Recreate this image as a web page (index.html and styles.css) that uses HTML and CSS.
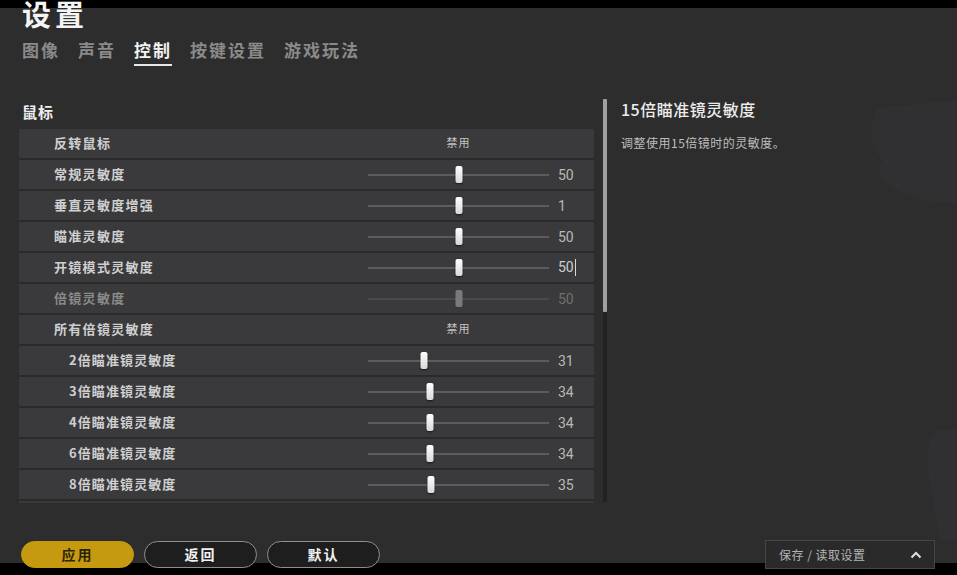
FILE: index.html
```html
<!DOCTYPE html>
<html lang="zh">
<head>
  <meta charset="UTF-8" />
  <meta name="viewport" content="width=device-width, initial-scale=1.0"/>
  <title>设置 - 控制</title>
  <link rel="stylesheet" href="styles.css">
</head>
<body>

  <div class="topbar"></div>

  <svg class="decor" width="120" height="440" viewBox="0 0 120 440">
    <path d="M40 8 L120 0 L120 104 L84 100 C64 92 30 80 46 60 C34 48 30 28 40 8 Z" fill="#303032"/>
    <path d="M100 330 C120 326 120 332 120 332 L120 440 L104 440 C96 420 100 400 92 380 C90 360 86 346 100 330 Z" fill="#303032"/>
  </svg>

  <h1 class="title">设置</h1>

  <nav class="tabs">
    <span class="tab">图像</span>
    <span class="tab">声音</span>
    <span class="tab active">控制</span>
    <span class="tab">按键设置</span>
    <span class="tab">游戏玩法</span>
  </nav>

  <div class="main">
    <div class="left">
      <h2 class="group">鼠标</h2>
      <div class="list">
        <div class="row">
          <span class="label">反转鼠标</span>
          <span class="choice">禁用</span>
        </div>
        <div class="row">
          <span class="label">常规灵敏度</span>
          <div class="slider"><i class="thumb" style="left:50%"></i></div>
          <span class="value">50</span>
        </div>
        <div class="row">
          <span class="label">垂直灵敏度增强</span>
          <div class="slider"><i class="thumb" style="left:50%"></i></div>
          <span class="value">1</span>
        </div>
        <div class="row">
          <span class="label">瞄准灵敏度</span>
          <div class="slider"><i class="thumb" style="left:50%"></i></div>
          <span class="value">50</span>
        </div>
        <div class="row">
          <span class="label">开镜模式灵敏度</span>
          <div class="slider"><i class="thumb" style="left:50%"></i></div>
          <span class="value editing">50</span>
        </div>
        <div class="row disabled">
          <span class="label">倍镜灵敏度</span>
          <div class="slider"><i class="thumb" style="left:50%"></i></div>
          <span class="value">50</span>
        </div>
        <div class="row">
          <span class="label">所有倍镜灵敏度</span>
          <span class="choice">禁用</span>
        </div>
        <div class="row sub">
          <span class="label">2倍瞄准镜灵敏度</span>
          <div class="slider"><i class="thumb" style="left:31%"></i></div>
          <span class="value">31</span>
        </div>
        <div class="row sub">
          <span class="label">3倍瞄准镜灵敏度</span>
          <div class="slider"><i class="thumb" style="left:34%"></i></div>
          <span class="value">34</span>
        </div>
        <div class="row sub">
          <span class="label">4倍瞄准镜灵敏度</span>
          <div class="slider"><i class="thumb" style="left:34%"></i></div>
          <span class="value">34</span>
        </div>
        <div class="row sub">
          <span class="label">6倍瞄准镜灵敏度</span>
          <div class="slider"><i class="thumb" style="left:34%"></i></div>
          <span class="value">34</span>
        </div>
        <div class="row sub">
          <span class="label">8倍瞄准镜灵敏度</span>
          <div class="slider"><i class="thumb" style="left:35%"></i></div>
          <span class="value">35</span>
        </div>
        <div class="row sub">
          <span class="label">15倍瞄准镜灵敏度</span>
          <div class="slider"><i class="thumb" style="left:35%"></i></div>
          <span class="value">35</span>
        </div>
      </div>
    </div>

    <div class="scrollbar"><div class="scroll-thumb"></div></div>

    <div class="info">
      <h3>15倍瞄准镜灵敏度</h3>
      <p>调整使用15倍镜时的灵敏度。</p>
    </div>
  </div>

  <div class="footer">
    <button class="btn apply">应用</button>
    <button class="btn">返回</button>
    <button class="btn">默认</button>
    <div class="saveload">
      <span>保存 / 读取设置</span>
      <svg width="12" height="8" viewBox="0 0 12 8"><path d="M1.5 6.5 L6 2 L10.5 6.5" fill="none" stroke="#e0e0e0" stroke-width="2"/></svg>
    </div>
  </div>

  <div class="bottombar"></div>

</body>
</html>
```

FILE: styles.css
```css
body {
  margin: 0;
  width: 957px;
  height: 575px;
  overflow: hidden;
  background: #2d2d2d;
  font-family: "Noto Sans CJK SC", "Noto Sans", sans-serif;
  color: #d0d0d0;
  display: flex;
  flex-direction: column;
  position: relative;
}

.topbar {
  height: 8px;
  background: #000;
  flex: none;
}

.bottombar {
  height: 13px;
  background: #000;
  margin-top: -6px;
  flex: none;
}

.decor {
  position: absolute;
  right: 0;
  top: 100px;
}

.title {
  margin: -10px 0 0 22px;
  font-size: 29px;
  line-height: 30px;
  font-weight: 700;
  letter-spacing: 4px;
  color: #f4f4f4;
  position: relative;
  flex: none;
}

.tabs {
  display: flex;
  gap: 18px;
  margin: 12px 0 0 22px;
  flex: none;
}

.tab {
  font-size: 17px;
  line-height: 20px;
  font-weight: 700;
  letter-spacing: 2px;
  color: #8a8a8a;
  padding-bottom: 4px;
  border-bottom: 2px solid transparent;
}

.tab.active {
  color: #f2f2f2;
  border-bottom-color: #e8e8e8;
}

.main {
  display: flex;
  margin-top: 33px;
  height: 404px;
  position: relative;
  flex: none;
}

.left {
  width: 575px;
  margin-left: 19px;
}

.group {
  margin: 0 0 8px 3px;
  padding-top: 4px;
  font-size: 15px;
  line-height: 18px;
  font-weight: 700;
  letter-spacing: 1px;
  color: #eeeeee;
}

.list {
  height: 374px;
  overflow: hidden;
  display: flex;
  flex-direction: column;
  gap: 2px;
  background: #2a2a2a;
}

.row {
  flex: none;
  height: 29px;
  background: #3a3a3c;
  display: grid;
  grid-template-columns: 340px 181px 36px;
  column-gap: 9px;
  align-items: center;
}

.label {
  padding-left: 35px;
  padding-bottom: 3px;
  font-size: 13px;
  font-weight: 700;
  letter-spacing: 1.3px;
  color: #cfcfcf;
}

.row.sub .label { padding-left: 50px; letter-spacing: 1.1px; }

.choice {
  text-align: center;
  padding-bottom: 3px;
  font-size: 11px;
  letter-spacing: 1px;
  color: #c4c4c4;
}

.slider {
  position: relative;
  height: 19px;
}

.slider::before {
  content: "";
  position: absolute;
  left: 0;
  right: 0;
  top: 9px;
  height: 2px;
  background: #5c5c5e;
}

.thumb {
  position: absolute;
  top: 1px;
  width: 7px;
  height: 17px;
  transform: translateX(-50%);
  border-radius: 2px;
  background: linear-gradient(#ffffff, #d8d8d8);
  box-shadow: 0 1px 2px rgba(0,0,0,0.6);
}

.value {
  font-family: Roboto, "Liberation Sans", sans-serif;
  font-size: 14px;
  color: #b8b8b8;
}

.value.editing {
  color: #cfcfcf;
}

.value.editing::after {
  content: "";
  display: inline-block;
  width: 1px;
  height: 17px;
  margin-left: 1px;
  vertical-align: -4px;
  background: #d8d8d8;
}

.row.disabled .label { color: #8a8a8a; }
.row.disabled .thumb { background: #7a7a7a; box-shadow: none; }
.row.disabled .slider::before { background: #4a4a4c; }
.row.disabled .value { color: #6f6f6f; }

.scrollbar {
  width: 4px;
  height: 403px;
  margin-left: 9px;
  background: #222223;
}

.scroll-thumb {
  height: 213px;
  background: #a0a0a0;
  border-radius: 1px;
}

.info {
  margin-left: 14px;
}

.info h3 {
  margin: 0;
  font-size: 16px;
  line-height: 20px;
  font-weight: 500;
  letter-spacing: 0.5px;
  color: #ececec;
}

.info p {
  margin: 15px 0 0;
  font-size: 12px;
  letter-spacing: 0.5px;
  color: #bdbdbd;
}

.footer {
  display: flex;
  align-items: center;
  gap: 10px;
  padding: 0 22px 0 21px;
  margin-top: 37px;
  height: 29px;
  position: relative;
  z-index: 1;
  flex: none;
}

.btn {
  width: 113px;
  height: 27px;
  border-radius: 14px;
  border: 1.5px solid #8f8f8f;
  background: #1e1e1e;
  color: #f2f2f2;
  font-family: "Noto Sans CJK SC", sans-serif;
  font-size: 14px;
  font-weight: 700;
  letter-spacing: 2px;
  padding: 0 0 2px;
}

.btn.apply {
  background: #c69a10;
  border-color: #c69a10;
  color: #2c2406;
}

.saveload {
  margin-left: auto;
  width: 170px;
  height: 29px;
  box-sizing: border-box;
  padding: 0 12px 0 13px;
  background: #2a2a2a;
  border: 1px solid #464646;
  display: flex;
  align-items: center;
  justify-content: space-between;
  font-size: 12px;
  letter-spacing: 0.5px;
  color: #b4b4b4;
}
```
